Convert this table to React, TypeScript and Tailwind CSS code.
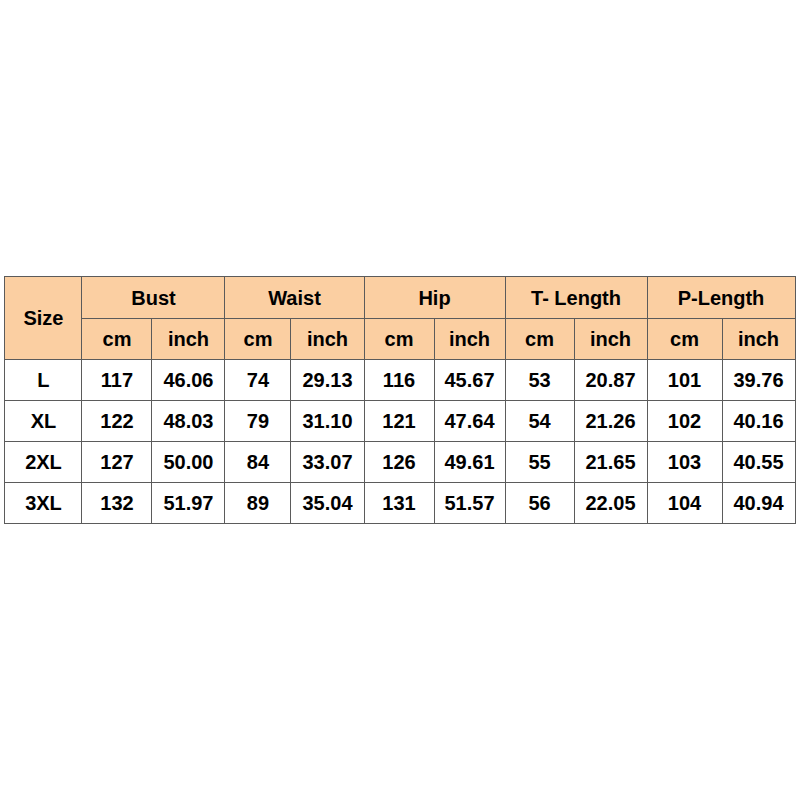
import React from "react";

const groups = ["Bust", "Waist", "Hip", "T- Length", "P-Length"];

const rows = [
  ["L", "117", "46.06", "74", "29.13", "116", "45.67", "53", "20.87", "101", "39.76"],
  ["XL", "122", "48.03", "79", "31.10", "121", "47.64", "54", "21.26", "102", "40.16"],
  ["2XL", "127", "50.00", "84", "33.07", "126", "49.61", "55", "21.65", "103", "40.55"],
  ["3XL", "132", "51.97", "89", "35.04", "131", "51.57", "56", "22.05", "104", "40.94"],
];

const widths = [77, 70, 73, 66, 73, 70, 71, 69, 73, 75, 73];

const cell = "border border-[#5b5b5b] text-center align-middle p-0";

export default function App() {
  return (
    <div className="flex h-[800px] w-[800px] items-center justify-center bg-white font-['Liberation_Sans',Arial,sans-serif] text-[20px] font-bold text-black">
      <table className="table-fixed border-collapse w-[790px]">
        <colgroup>
          {widths.map((w, i) => (
            <col key={i} style={{ width: w }} />
          ))}
        </colgroup>
        <thead className="bg-[#fbcfa2]">
          <tr className="h-[42px]">
            <th rowSpan={2} className={cell + " font-bold"}>
              Size
            </th>
            {groups.map((g) => (
              <th key={g} colSpan={2} className={cell + " font-bold"}>
                {g}
              </th>
            ))}
          </tr>
          <tr className="h-[41px]">
            {groups.map((g) => (
              <React.Fragment key={g}>
                <th className={cell + " font-bold"}>cm</th>
                <th className={cell + " font-bold"}>inch</th>
              </React.Fragment>
            ))}
          </tr>
        </thead>
        <tbody>
          {rows.map((r) => (
            <tr key={r[0]} className="h-[41px]">
              {r.map((v, i) => (
                <td key={i} className={cell}>
                  {v}
                </td>
              ))}
            </tr>
          ))}
        </tbody>
      </table>
    </div>
  );
}
